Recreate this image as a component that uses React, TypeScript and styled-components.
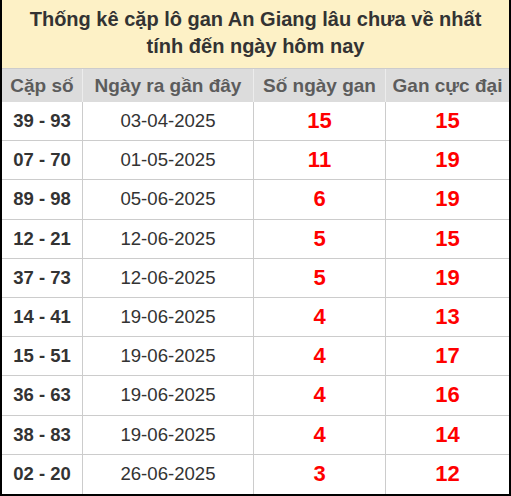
import React from "react";
import styled, { createGlobalStyle } from "styled-components";

const GlobalStyle = createGlobalStyle`
  html, body {
    margin: 0;
    padding: 0;
    background: #fff;
    font-family: "Liberation Sans", Arial, sans-serif;
  }
`;

const Board = styled.div`
  width: 511px;
  height: 496px;
  box-sizing: border-box;
  border: 2px solid #000;
  border-top: none;
  display: flex;
  flex-direction: column;
`;

const Title = styled.div`
  height: 69px;
  box-sizing: border-box;
  background: #fdf1c6;
  color: #333;
  font-size: 20px;
  font-weight: bold;
  line-height: 27px;
  text-align: center;
  padding-top: 6px;
  border-bottom: 1px solid #ccc;
`;

const Row = styled.div<{ $head?: boolean }>`
  display: grid;
  grid-template-columns: 80px 171px 132px 1fr;
  height: ${(p) => (p.$head ? "33px" : "39.2px")};
  box-sizing: border-box;
  background: ${(p) => (p.$head ? "#dcdcdc" : "#fff")};
  border-bottom: ${(p) => (p.$head ? "none" : "1px solid #ccc")};
  &:last-child {
    border-bottom: none;
  }
`;

const Cell = styled.div<{ $head?: boolean }>`
  display: flex;
  align-items: center;
  justify-content: center;
  border-left: 1px solid ${(p) => (p.$head ? "#ececec" : "#ccc")};
  &:first-child {
    border-left: none;
  }
  ${(p) =>
    p.$head &&
    `
    color: #5c5c5c;
    font-size: 19px;
    font-weight: bold;
  `}
`;

const Pair = styled.span`
  color: #333;
  font-size: 18.5px;
  font-weight: bold;
`;

const DateText = styled.span`
  color: #333;
  font-size: 18.6px;
`;

const Count = styled.span`
  color: #f00;
  font-size: 22px;
  font-weight: bold;
`;

const rows = [
  ["39 - 93", "03-04-2025", 15, 15],
  ["07 - 70", "01-05-2025", 11, 19],
  ["89 - 98", "05-06-2025", 6, 19],
  ["12 - 21", "12-06-2025", 5, 15],
  ["37 - 73", "12-06-2025", 5, 19],
  ["14 - 41", "19-06-2025", 4, 13],
  ["15 - 51", "19-06-2025", 4, 17],
  ["36 - 63", "19-06-2025", 4, 16],
  ["38 - 83", "19-06-2025", 4, 14],
  ["02 - 20", "26-06-2025", 3, 12],
] as const;

const App: React.FC = () => (
  <>
    <GlobalStyle />
    <Board>
      <Title>
        Thống kê cặp lô gan An Giang lâu chưa về nhất
        <br />
        tính đến ngày hôm nay
      </Title>
      <Row $head>
        <Cell $head>Cặp số</Cell>
        <Cell $head>Ngày ra gần đây</Cell>
        <Cell $head>Số ngày gan</Cell>
        <Cell $head>Gan cực đại</Cell>
      </Row>
      {rows.map(([pair, date, days, max]) => (
        <Row key={pair}>
          <Cell>
            <Pair>{pair}</Pair>
          </Cell>
          <Cell>
            <DateText>{date}</DateText>
          </Cell>
          <Cell>
            <Count>{days}</Count>
          </Cell>
          <Cell>
            <Count>{max}</Count>
          </Cell>
        </Row>
      ))}
    </Board>
  </>
);

export default App;
